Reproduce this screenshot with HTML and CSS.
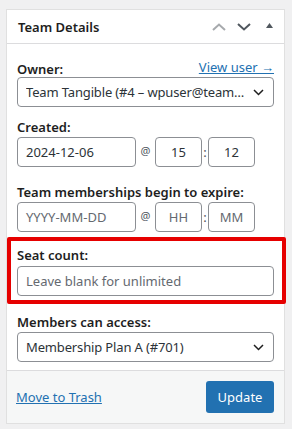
FILE: index.html
```html
<!DOCTYPE html>
<html lang="en">
<head>
  <meta charset="UTF-8" />
  <meta name="viewport" content="width=device-width, initial-scale=1.0"/>
  <title>Team Details</title>
  <link rel="stylesheet" href="styles.css">
</head>
<body>
  <div class="panel">
    <div class="panel-head">
      <h2>Team Details</h2>
      <div class="head-actions">
        <svg class="chev chev-up" width="14" height="8" viewBox="0 0 14 8"><path d="M1 7 L7 1.5 L13 7" fill="none" stroke="currentColor" stroke-width="2"/></svg>
        <svg class="chev chev-down" width="14" height="8" viewBox="0 0 14 8"><path d="M1 1 L7 6.5 L13 1" fill="none" stroke="currentColor" stroke-width="2"/></svg>
        <svg class="toggle" width="7" height="5" viewBox="0 0 7 5"><path d="M0 5 L3.5 0 L7 5 Z" fill="currentColor"/></svg>
      </div>
    </div>

    <div class="panel-body">
      <div class="field">
        <div class="label-row">
          <label>Owner:</label>
          <a href="#" class="link">View user &rarr;</a>
        </div>
        <div class="select">
          <span class="select-text">Team Tangible (#4 – wpuser@teamtangible.com)</span>
          <svg width="11" height="7" viewBox="0 0 11 7"><path d="M1 1 L5.5 5.5 L10 1" fill="none" stroke="#1e1e1e" stroke-width="1.5"/></svg>
        </div>
      </div>

      <div class="field date-field">
        <label>Created:</label>
        <div class="datetime">
          <div class="input date">2024-12-06</div>
          <span class="at">@</span>
          <div class="input small">15</div>
          <span class="colon">:</span>
          <div class="input small">12</div>
        </div>
      </div>

      <div class="field expire-field">
        <label>Team memberships begin to expire:</label>
        <div class="datetime">
          <div class="input date placeholder">YYYY-MM-DD</div>
          <span class="at">@</span>
          <div class="input small placeholder">HH</div>
          <span class="colon">:</span>
          <div class="input small placeholder">MM</div>
        </div>
      </div>

      <div class="field highlight">
        <label>Seat count:</label>
        <div class="input placeholder">Leave blank for unlimited</div>
      </div>

      <div class="field last">
        <label>Members can access:</label>
        <div class="select">
          <span class="select-text">Membership Plan A (#701)</span>
          <svg width="11" height="7" viewBox="0 0 11 7"><path d="M1 1 L5.5 5.5 L10 1" fill="none" stroke="#1e1e1e" stroke-width="1.5"/></svg>
        </div>
      </div>
    </div>

    <div class="panel-foot">
      <a href="#" class="link">Move to Trash</a>
      <button>Update</button>
    </div>
  </div>
</body>
</html>
```

FILE: styles.css
```css
body {
  margin: 0;
  background: #f0f0f1;
  font-family: 'Noto Sans', 'Open Sans', sans-serif;
  font-size: 13px;
  color: #1e1e1e;
}
.panel {
  margin: 9px 0 0 6px;
  width: 277px;
  background: #fff;
  border: 1px solid #e0e0e0;
}
.panel-head {
  height: 33px;
  display: flex;
  align-items: center;
  justify-content: space-between;
  padding: 0 11px 0 11px;
  border-bottom: 1px solid #dcdcde;
}
.panel-head h2 {
  margin: 0;
  font-size: 13px;
  font-weight: 600;
}
.head-actions {
  display: flex;
  align-items: center;
  gap: 11px;
}
.chev-up { color: #a7aaad; }
.chev-down { color: #50575e; }
.toggle { color: #50575e; margin-left: 4px; margin-top: -2px; }

.panel-body {
  padding: 17px 10px 8px 10px;
}
.field {
  margin-bottom: 12px;
}
.field.date-field {
  margin-bottom: 17px;
}
.field.expire-field {
  margin-bottom: 5px;
}
.field.last {
  margin-bottom: 0;
}
.field label {
  display: block;
  font-weight: 600;
  line-height: 16px;
  margin-bottom: 2px;
  color: #1e1e1e;
}
.label-row {
  display: flex;
  justify-content: space-between;
  align-items: flex-start;
}
.label-row label {
  margin-bottom: 0;
}
.link {
  color: #2271b1;
  text-decoration: underline;
}
.label-row .link {
  line-height: 16px;
  margin-top: -2px;
}
.select {
  height: 30px;
  box-sizing: border-box;
  border: 1px solid #8c8f94;
  border-radius: 4px;
  display: flex;
  align-items: center;
  padding: 0 9px 0 8px;
  gap: 7px;
}
.select-text {
  flex: 1;
  white-space: nowrap;
  overflow: hidden;
  text-overflow: ellipsis;
  color: #2c3338;
  letter-spacing: -0.15px;
}
.datetime {
  display: flex;
  align-items: center;
}
.input {
  height: 30px;
  border: 1px solid #8c8f94;
  border-radius: 4px;
  display: flex;
  align-items: center;
  padding: 0 8px;
  color: #2c3338;
  box-sizing: border-box;
}
.input.date { width: 119px; }
.input.small { width: 47px; justify-content: center; padding: 0; }
.placeholder { color: #646970; }
.at {
  width: 19px;
  text-align: center;
  font-size: 11px;
  margin-top: -3px;
  color: #50575e;
}
.colon {
  width: 6px;
  text-align: center;
  color: #50575e;
}
.highlight {
  border: 4px solid #e60000;
  border-radius: 2px;
  margin: 0 -12px 10px -10px;
  padding: 6px 8px 4px 6px;
}
.highlight label {
  margin-bottom: 3px;
}
.panel-foot {
  background: #f6f7f7;
  border-top: 1px solid #dcdcde;
  display: flex;
  justify-content: space-between;
  align-items: center;
  padding: 10px 10px 10px 9px;
}
button {
  font-family: inherit;
  font-size: 13px;
  background: #2271b1;
  color: #fff;
  border: none;
  border-radius: 3px;
  width: 68px;
  height: 32px;
  cursor: pointer;
}
```
